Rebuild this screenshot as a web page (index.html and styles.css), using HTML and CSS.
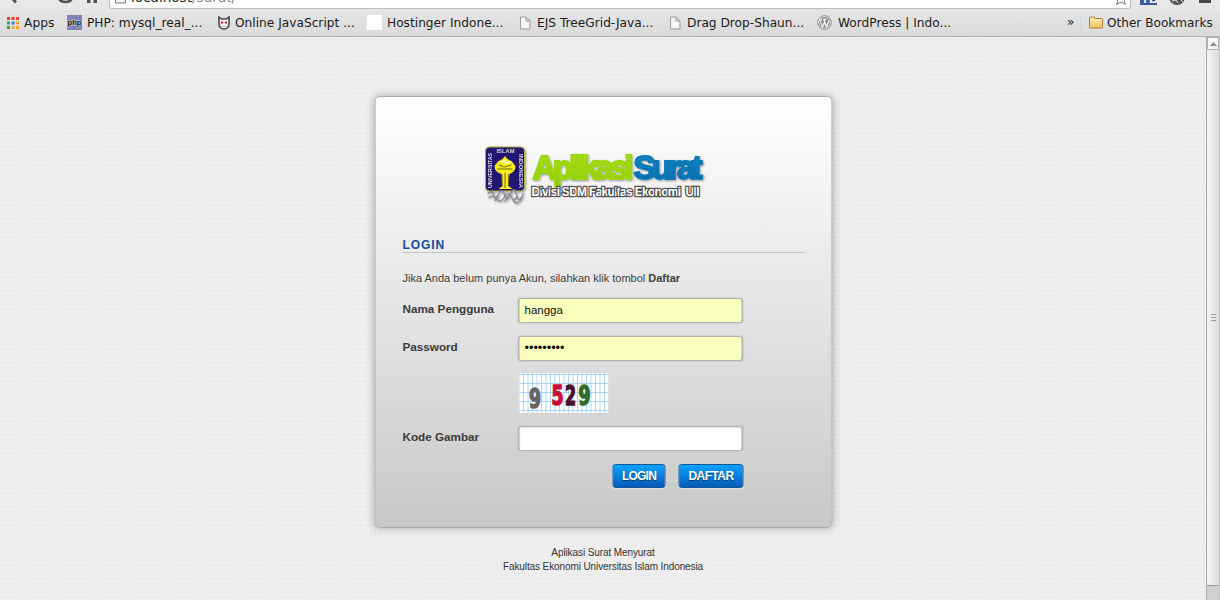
FILE: index.html
```html
<!DOCTYPE html>
<html lang="id">
<head>
<meta charset="utf-8">
<title>Aplikasi Surat</title>
<link rel="stylesheet" href="styles.css">
</head>
<body>
<header class="browser">
  <div class="toolbar">
    <svg class="nav" width="109" height="8" viewBox="0 0 109 8" fill="#505050">
      <path d="M9-3L15 3.500L17 1.500L13-3Z"/><path d="M37 3L45-5H41V-1Z" fill="#ccc"/>
      <path d="M59-2Q60 2 65.500 2Q71 2 72-2" fill="none" stroke="#505050" stroke-width="2.500"/>
      <path d="M87-3H97V3H93.500V-1H90.500V3H87Z"/>
    </svg>
    <div class="omnibox">
      <svg width="14" height="8" viewBox="0 0 14 8"><path d="M1.500-7V3H11.500V-7Z" fill="#f4f4f4" stroke="#777"/></svg>
      <span class="url">localhost<span class="path">/surat/</span></span>
      <svg class="star" width="16" height="8" viewBox="0 0 16 8"><path d="M2-2H6L8-6L10-2H14L11 1L12.500 4.500L8 2L3.500 4.500L5 1Z" fill="#fff" stroke="#777"/></svg>
    </div>
    <svg class="ext" width="89" height="8" viewBox="0 0 89 8">
      <rect x="9" y="-10" width="17" height="15" fill="#3a57a4"/>
      <text class="yb" x="10" y="3">YB</text>
      <circle cx="46" cy="-3" r="8" fill="#555"/><path d="M41 1L45 0L47 3M49-1L52 2" stroke="#ddd" fill="none"/>
      <rect x="68" y="-1" width="12" height="4" fill="#484848"/>
    </svg>
  </div>
  <nav class="bookmarks">
    <a class="bm apps"><svg width="12" height="12" viewBox="0 0 12 12"><g fill="#e94235"><rect width="3" height="3"/><rect x="4.500" width="3" height="3"/><rect x="9" width="3" height="3"/></g><g><rect y="4.500" width="3" height="3" fill="#2aa653"/><rect x="4.500" y="4.500" width="3" height="3" fill="#2786f0"/><rect x="9" y="4.500" width="3" height="3" fill="#f6a524"/></g><rect y="9" width="3" height="3" fill="#2aa653"/><rect x="4.500" y="9" width="3" height="3" fill="#f6a524"/><rect x="9" y="9" width="3" height="3" fill="#f6a524"/></svg><span>Apps</span></a>
    <a class="bm"><svg width="15" height="15" viewBox="0 0 15 15"><rect width="15" height="15" fill="#8282bb"/><text class="php" x="0.500" y="10" textLength="14" lengthAdjust="spacingAndGlyphs">php</text></svg><span>PHP: mysql_real_...</span></a>
    <a class="bm js"><svg width="12" height="14" viewBox="0 0 12 14"><path d="M1 1L3.500 3H8.500L11 1V8Q10.500 13 6 13T1 8Z" fill="#f8f8f8" stroke="#494949" stroke-width="1.600"/><circle cx="4" cy="6.500" r="1.200" fill="#d02040"/><circle cx="8" cy="6.500" r="1.200" fill="#d02040"/><path d="M4 10.500H8" stroke="#bbb"/></svg><span>Online JavaScript ...</span></a>
    <a class="bm"><svg width="15" height="15"><rect width="15" height="15" fill="#fff"/></svg><span>Hostinger Indone...</span></a>
    <a class="bm doc"><svg width="11" height="14" viewBox="0 0 11 14"><path d="M.5 1H6L10 5V13H.5ZM6 1V5H10" fill="#f6f6f6" stroke="#999"/></svg><span>EJS TreeGrid-Java...</span></a>
    <a class="bm doc"><svg width="11" height="14" viewBox="0 0 11 14"><path d="M.5 1H6L10 5V13H.5ZM6 1V5H10" fill="#f6f6f6" stroke="#999"/></svg><span>Drag Drop-Shaun...</span></a>
    <a class="bm wp"><svg width="15" height="15" viewBox="0 0 15 15"><circle cx="7.500" cy="7.500" r="6.800" fill="#ededed" stroke="#858585"/><circle cx="7.500" cy="7.500" r="5.500" fill="#888"/><path d="M2.500 4.500L5.500 12L7.500 7L9.500 12L12 5.500M2 4.500H5M6 4.500H9.500M7 5L9.500 12" fill="none" stroke="#f4f4f4" stroke-width="1.300"/></svg><span>WordPress | Indo...</span></a>
    <span class="more">»</span>
    <a class="bm other"><svg width="14" height="13" viewBox="0 0 14 13"><defs><linearGradient id="folder" x2="0" y2="1"><stop stop-color="#ffe9ad"/><stop offset="1" stop-color="#f2c261"/></linearGradient></defs><path d="M.5 11V2Q.5 1 1.500 1H5L6.500 2.500H12.500Q13.500 2.500 13.500 3.500V11Q13.500 12 12.500 12H1.500Q.5 12 .5 11Z" fill="url(#folder)" stroke="#ad7b3b"/><path d="M2 4.500H12" stroke="#fff0c8"/></svg><span>Other Bookmarks</span></a>
  </nav>
</header>
<div class="viewport">
  <main class="page">
    <form class="panel">
      <svg class="logo" width="222" height="60" viewBox="0 0 222 60" role="img" aria-label="Aplikasi Surat">
        <defs>
          <linearGradient id="green" x2="0" y2="1"><stop stop-color="#b5e51d"/><stop offset="1" stop-color="#86c900"/></linearGradient>
          <linearGradient id="blue" x2="0" y2="1"><stop stop-color="#178fd0"/><stop offset="1" stop-color="#0063a6"/></linearGradient>
          <filter id="shade" x="-10%" y="-10%" width="120%" height="130%"><feDropShadow dx="1" dy="1" stdDeviation="1" flood-opacity=".4"/></filter>
        </defs>
        <g filter="url(#shade)">
          <rect x="1" y="1" width="39" height="44" rx="4" fill="#201870" stroke="#b6aa42"/>
          <path d="M20.500 10Q23 14 27 15L31 20Q31 26 25 28L24 40L28 43H14L18 40L17 28Q10 26 10 20L14 15Q18 14 20.500 10Z" fill="#f7ec13"/>
          <path d="M14 19L20 21L27 19M13 23H28M20.500 27V42M17.500 28V40M24 28V40" fill="none" stroke="#554a20" stroke-width=".8"/>
          <path d="M16 16L20 15L21 17L26 16" stroke="#fff" stroke-width="1.300" fill="none"/>
          <g class="seal"><text x="12" y="7" textLength="18" lengthAdjust="spacingAndGlyphs">ISLAM</text><text transform="translate(7 42) rotate(-90)" textLength="35" lengthAdjust="spacingAndGlyphs">UNIVERSITAS</text><text transform="translate(34 8) rotate(90)" textLength="34" lengthAdjust="spacingAndGlyphs">INDONESIA</text></g>
          <path d="M3 48Q8 43 9 49T14 48T20 49T26 48T32 49T39 47M4 52Q8 48 12 53T20 51T28 53T38 51M10 55L14 50M20 56L24 50M29 55L33 50" stroke="#8b8b98" stroke-width="1.300" fill="none"/>
        </g>
        <g class="brand" filter="url(#shade)">
          <text x="48" y="33" textLength="101" fill="url(#green)" stroke="#9cd60d">Aplikasi</text>
          <text x="149" y="33" textLength="69" fill="url(#blue)" stroke="#0f78b6">Surat</text>
        </g>
        <text class="tagline" x="47" y="50" textLength="168" xml:space="preserve">Divisi SDM Fakultas Ekonomi  UII</text>
      </svg>
      <h1 class="title">LOGIN</h1>
      <p class="hint">Jika Anda belum punya Akun, silahkan klik tombol <b>Daftar</b></p>
      <div class="row"><label for="user">Nama Pengguna</label><input class="field filled" id="user" value="hangga"></div>
      <div class="row"><label for="pass">Password</label><div class="field filled password" id="pass">•••••••••</div></div>
      <div class="captcha"><svg width="90" height="40" viewBox="0 0 90 40">
        <defs><pattern id="grid" width="4.500" height="9" patternUnits="userSpaceOnUse"><path d="M.5 0V9M0 1.500H4.500" stroke="#a9d5fb" stroke-width="1"/></pattern></defs>
        <rect width="90" height="40" fill="#fff"/><rect width="90" height="40" fill="url(#grid)"/>
        <g class="digits"><text x="10.500" y="34.500" textLength="12" lengthAdjust="spacingAndGlyphs" fill="#666" stroke="#666">9</text><text x="33" y="31.500" textLength="12" lengthAdjust="spacingAndGlyphs" fill="#c90e35" stroke="#c90e35">5</text><text x="46.500" y="32" textLength="11" lengthAdjust="spacingAndGlyphs" fill="#4c102f" stroke="#4c102f">2</text><text x="60" y="32" textLength="12" lengthAdjust="spacingAndGlyphs" fill="#326c2a" stroke="#326c2a">9</text></g>
      </svg></div>
      <div class="row"><label for="code">Kode Gambar</label><input class="field" id="code"></div>
      <div class="actions"><button class="btn login" type="button">LOGIN</button><button class="btn daftar" type="button">DAFTAR</button></div>
    </form>
    <footer class="foot">Aplikasi Surat Menyurat<br>Fakultas Ekonomi Universitas Islam Indonesia</footer>
  </main>
  <div class="scrollbar"><div class="up"><svg width="7" height="4"><path d="M0 4L3.500 0L7 4Z" fill="#888"/></svg></div><div class="thumb"><i></i><i></i><i></i></div><div class="track"></div></div>
</div>
</body>
</html>
```
FILE: styles.css
```css
* { box-sizing: border-box; }
body { margin: 0; width: 1220px; height: 600px; overflow: hidden; font-family: "Liberation Sans", Arial, sans-serif; color: #404040; }
svg { display: block; flex: none; }
.browser { height: 37px; background: linear-gradient(#e9e9e9, #e5e5e5 9px, #dadada 36px); border-bottom: 1px solid #b2b2b2; font-family: "DejaVu Sans", sans-serif; color: #1c1c1c; }
.toolbar { display: flex; height: 9px; }
.omnibox { display: flex; width: 1023px; height: 9px; padding-left: 4px; background: #fff; border: 1px solid #bdbdbd; border-top: 0; border-radius: 0 0 3px 3px; overflow: hidden; }
.url { margin: -10px 0 0 3px; font-size: 13.600px; line-height: 15px; color: #222; white-space: nowrap; }
.path { color: #888; }
.star { margin-left: auto; margin-right: 1px; }
.yb { font: bold 12px "Liberation Sans", sans-serif; fill: #fff; }
.bookmarks { display: grid; grid-template-columns: 60px 151px 149px 152px 150px 148px 250px 13px 137px; height: 27px; padding-left: 7px; align-items: center; font-size: 12.200px; line-height: 15px; }
.bm { display: flex; align-items: center; gap: 5px; white-space: nowrap; }
.bm span { padding-top: 1px; }
.bm.apps { font-size: 12.300px; }
.bm.doc { padding-left: 1px; gap: 6px; }
.bm.wp { gap: 6px; }
.php { font: bold 8px "Liberation Sans", sans-serif; fill: #111; stroke: #ddd; stroke-width: 1px; paint-order: stroke; }
.more { font-size: 12px; }
.other { border-left: 1px solid #c9d8e6; padding-left: 8px; gap: 4px; font-size: 12.100px; }
.viewport { display: flex; height: 563px; }
.page { flex: 1; padding-top: 59px; background: radial-gradient(circle at 2px 2px, #e6e6e6 .6px, transparent 1.2px) 0 0 / 4.500px 4.500px, #eee; }
.panel { width: 458px; height: 432px; margin: 0 auto; padding: 49px 27px 0; background: linear-gradient(#fff, #c8c8c8); border: 1px solid #a9a9a9; border-radius: 5px; box-shadow: 0 0 8px rgba(0,0,0,.28); transform: translateX(.5px); }
.logo { margin-left: 82px; overflow: visible; }
.seal { font: bold 5.500px "Liberation Sans", sans-serif; fill: #ddd; }
.brand { font: bold 33px "Liberation Sans", sans-serif; stroke-width: 2px; }
.tagline { font: bold 12px "Liberation Sans", sans-serif; fill: #fff; stroke: #555; stroke-width: 2.500px; paint-order: stroke; }
.title { height: 19px; margin: 28px 0 0; border-bottom: 1px solid #c5c5c5; color: #10509b; font-size: 12px; line-height: 23px; letter-spacing: .9px; }
.hint { margin: 18px 0 12px; font-size: 11px; line-height: 15px; }
.row { display: flex; height: 25px; margin-bottom: 13px; }
.row label { width: 116px; padding-top: 3px; font-size: 11.700px; font-weight: bold; line-height: 15px; color: #3b3b3b; }
.field { width: 224px; height: 25px; padding: 0 5px 1px; border: 1px solid #b2b2b2; border-radius: 3px; background: #fff; box-shadow: 0 0 2px #aaa, inset 0 1px 2px #ddd; font: 11.500px/23px "Liberation Sans", sans-serif; color: #111; }
.filled { background: #faffbd; box-shadow: 0 0 2px #aaa; }
.password { font-size: 12.700px; }
.captcha { height: 40px; margin: -1px 0 13px 116px; }
.digits { font: bold 26px "DejaVu Sans Condensed", "DejaVu Sans", sans-serif; stroke-width: 1.500px; }
.actions { display: flex; justify-content: flex-end; gap: 13px; width: 341px; }
.btn { height: 24px; padding: 0; border: 1px solid #17559a; border-radius: 3px; background: linear-gradient(#08a3ff, #075bb8); box-shadow: 0 1px 1px #e4e4e4; color: #fff; font: bold 12px "Liberation Sans", sans-serif; text-shadow: 0 1px 1px #0008; }
.login { width: 53px; letter-spacing: -.8px; }
.daftar { width: 65px; letter-spacing: -.55px; }
.foot { margin-top: 18px; text-align: center; font-size: 10px; line-height: 14px; letter-spacing: -.1px; color: #333; }
.scrollbar { display: flex; flex-direction: column; width: 14px; border-left: 1px solid #aaa; border-right: 1px solid #c5c5c5; background: #d0d0d0; }
.up { display: grid; place-items: center; height: 13px; background: #f5f5f5; border: 1px solid #b2b2b2; }
.thumb { display: flex; flex-direction: column; align-items: center; justify-content: center; gap: 2px; height: 536px; background: linear-gradient(90deg, #f3f3f3, #dedede); border-bottom: 1px solid #999; }
.thumb i { width: 5px; height: 1px; background: #999; }
.track { flex: 1; }
```
